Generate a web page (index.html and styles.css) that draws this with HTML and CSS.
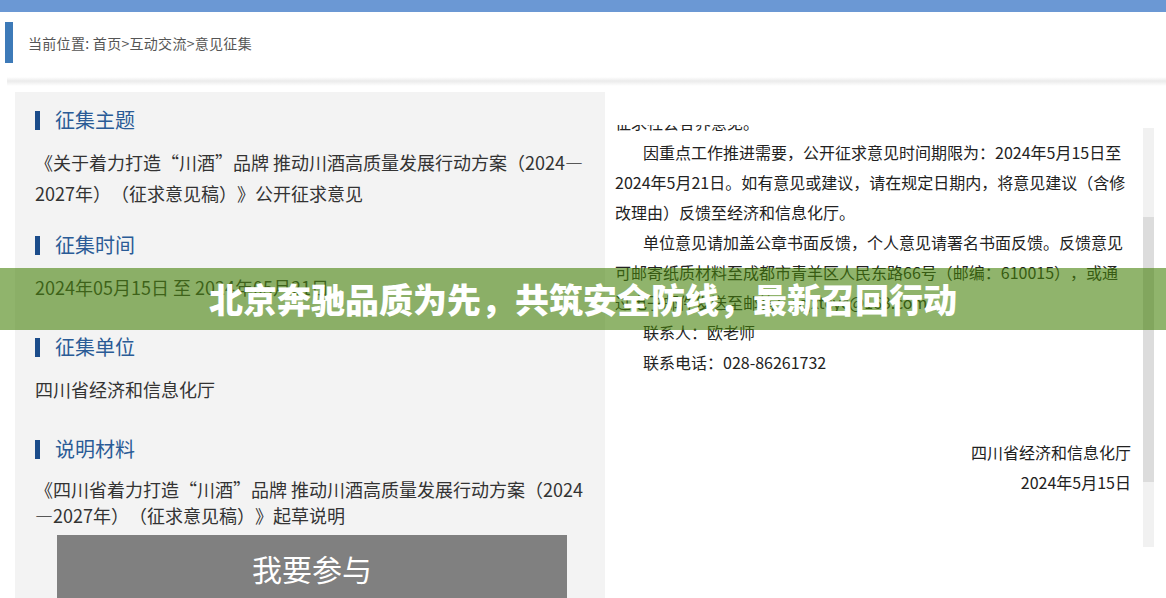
FILE: index.html
```html
<!DOCTYPE html>
<html lang="zh-CN">
<head>
<meta charset="utf-8">
<title>意见征集</title>
<link rel="stylesheet" href="styles.css">
</head>
<body>
<div class="topbar"></div>
<div class="crumb"><span class="crumb-mark"></span><span class="crumb-text">当前位置: 首页&gt;互动交流&gt;意见征集</span></div>
<div class="divider"></div>
<div class="main">
  <div class="info">
    <section class="sec sec-first">
      <h2 class="sec-title">征集主题</h2>
      <p class="sec-text">《关于着力打造“川酒”品牌 推动川酒高质量发展行动方案（2024—<br>2027年）（征求意见稿）》公开征求意见</p>
    </section>
    <section class="sec">
      <h2 class="sec-title">征集时间</h2>
      <p class="sec-text">2024年05月15日 至 2024年05月21日</p>
    </section>
    <section class="sec">
      <h2 class="sec-title">征集单位</h2>
      <p class="sec-text">四川省经济和信息化厅</p>
    </section>
    <section class="sec sec-last">
      <h2 class="sec-title">说明材料</h2>
      <p class="sec-text">《四川省着力打造“川酒”品牌 推动川酒高质量发展行动方案（2024<br>—2027年）（征求意见稿）》起草说明</p>
    </section>
    <div class="join-btn">我要参与</div>
  </div>
  <div class="detail">
    <div class="viewport">
      <div class="doc">
        <p>征求社会各界意见。</p>
        <p class="indent">因重点工作推进需要，公开征求意见时间期限为：2024年5月15日至<br>2024年5月21日。如有意见或建议，请在规定日期内，将意见建议（含修<br>改理由）反馈至经济和信息化厅。</p>
        <p class="indent">单位意见请加盖公章书面反馈，个人意见请署名书面反馈。反馈意见<br>可邮寄纸质材料至成都市青羊区人民东路66号（邮编：610015），或通<br>过电子邮件发送至邮箱：scjxtcyc@163.com。</p>
        <p class="indent">联系人：欧老师</p>
        <p class="indent">联系电话：028-86261732</p>
        <p class="sign">四川省经济和信息化厅<br>2024年5月15日</p>
      </div>
    </div>
    <div class="track"><div class="thumb"></div></div>
  </div>
</div>
<div class="banner">北京奔驰品质为先，共筑安全防线，最新召回行动</div>
</body>
</html>
```

FILE: styles.css
```css
html, body {
  margin: 0;
  height: 598px;
  overflow: hidden;
  background: #fff;
  font-family: "Noto Sans CJK SC", "Microsoft YaHei", sans-serif;
  text-spacing-trim: space-all;
}

.topbar {
  height: 12px;
  background: #6b98d4;
}

.crumb {
  display: flex;
  align-items: center;
  height: 41px;
  margin-top: 10px;
  margin-left: 5px;
}

.crumb-mark {
  width: 8px;
  height: 41px;
  background: #3d7ab8;
}

.crumb-text {
  margin-left: 15px;
  font-size: 14px;
  line-height: 20px;
  letter-spacing: 0.3px;
  color: #555;
}

.divider {
  height: 9px;
  margin-top: 14px;
  margin-left: 7px;
  background: linear-gradient(#fff, #ebebeb 45%, #fff);
}

.main {
  display: flex;
  margin-top: 6px;
  height: 506px;
}

.info {
  flex: none;
  width: 550px;
  margin-left: 15px;
  padding: 13px 20px 0;
  background: #f3f3f3;
}

.sec {
  margin-bottom: 29px;
}

.sec-first {
  margin-bottom: 21px;
}

.sec-title {
  display: flex;
  align-items: center;
  height: 30px;
  margin: 0 0 12px;
  font-size: 20px;
  line-height: 30px;
  font-weight: normal;
  color: #2a5b96;
}

.sec-title::before {
  content: "";
  width: 5px;
  height: 19px;
  margin-right: 15px;
  background: #1b4c8a;
}

.sec-text {
  margin: 0;
  font-size: 18px;
  line-height: 31px;
  color: #333;
  white-space: nowrap;
}

.sec-last {
  margin-bottom: 7px;
}

.sec-last .sec-text {
  line-height: 26px;
}

.join-btn {
  width: 510px;
  height: 66px;
  margin-left: 22px;
  background: #808080;
  color: #fff;
  font-size: 30px;
  line-height: 66px;
  text-align: center;
}

.detail {
  flex: 1;
  display: flex;
  padding-left: 10px;
}

.viewport {
  width: 516px;
  height: 422px;
  margin-top: 33px;
  overflow: hidden;
}

.doc {
  margin-top: -18px;
  font-size: 16px;
  line-height: 30px;
  color: #222;
}

.doc p {
  margin: 0;
  white-space: nowrap;
}

.doc .indent {
  text-indent: 28px;
}

.doc .sign {
  margin-top: 60px;
  text-align: right;
}

.track {
  width: 11px;
  height: 419px;
  margin-top: 36px;
  margin-left: 12px;
  background: #f1f1f1;
}

.thumb {
  height: 265px;
  margin-top: 89px;
  background: #dcdcdc;
}

.banner {
  position: absolute;
  left: 0;
  right: 0;
  top: 268px;
  height: 62px;
  background: rgba(70, 130, 10, 0.6);
  color: #fff;
  font-size: 34px;
  font-weight: 900;
  line-height: 62px;
  text-align: center;
}
```
